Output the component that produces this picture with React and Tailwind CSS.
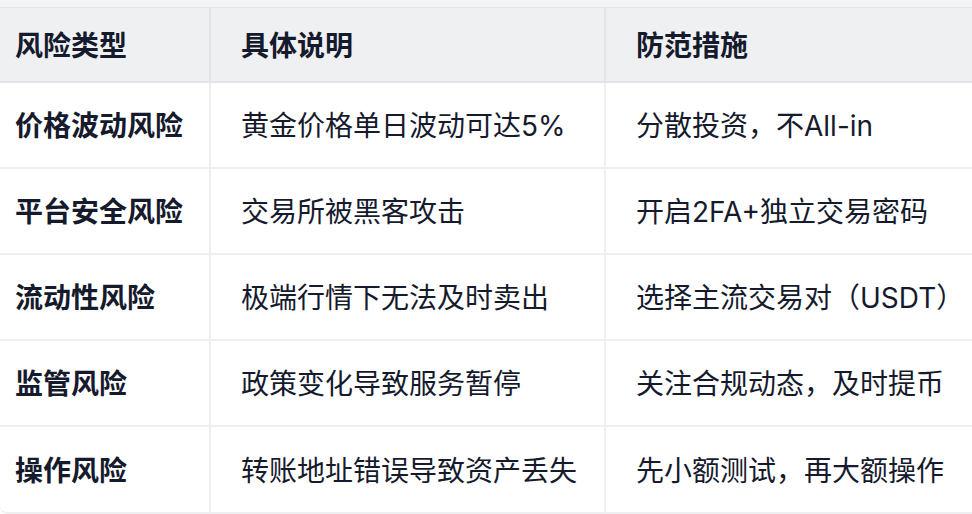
const rows = [
  ['价格波动风险', '黄金价格单日波动可达5%', '分散投资，不All-in'],
  ['平台安全风险', '交易所被黑客攻击', '开启2FA+独立交易密码'],
  ['流动性风险', '极端行情下无法及时卖出', '选择主流交易对（USDT）'],
  ['监管风险', '政策变化导致服务暂停', '关注合规动态，及时提币'],
  ['操作风险', '转账地址错误导致资产丢失', '先小额测试，再大额操作'],
]

export default function App() {
  return (
    <div
      className="w-[972px] h-[514px] overflow-hidden bg-white text-[#151a2d]"
      style={{ fontFamily: '"Inter", "Noto Sans CJK SC", sans-serif' }}
    >
      <div className="h-[8px] bg-[#f3f4f6] border-b border-[#e3e4e7]"></div>
      <div className="w-[1000px] rounded-b-lg border-b-2 border-[#eeeff1] overflow-hidden">
        <table className="w-full border-collapse table-fixed">
          <colgroup>
            <col className="w-[210px]" />
            <col className="w-[395px]" />
            <col />
          </colgroup>
          <thead>
            <tr className="bg-[#eff0f2] h-[74px]">
              <th className="pl-[15px] pt-[2px] text-left text-[28px] font-bold border-b-2 border-r-2 border-[#e3e4e7]">风险类型</th>
              <th className="pl-[30px] pt-[2px] text-left text-[28px] font-bold border-b-2 border-r-2 border-[#e3e4e7]">具体说明</th>
              <th className="pl-[30px] pt-[2px] text-left text-[28px] font-bold border-b-2 border-[#e3e4e7]">防范措施</th>
            </tr>
          </thead>
          <tbody>
            {rows.map((r, i) => (
              <tr key={i} className="h-[86px]">
                <td className={`pl-[15px] pt-[2px] text-[28px] font-bold border-r-2 border-[#eeeff1] ${i < rows.length - 1 ? 'border-b-2' : ''}`}>{r[0]}</td>
                <td className={`pl-[30px] pt-[2px] text-[28px] border-r-2 border-[#eeeff1] ${i < rows.length - 1 ? 'border-b-2' : ''}`}>{r[1]}</td>
                <td className={`pl-[30px] pt-[2px] text-[28px] border-[#eeeff1] whitespace-nowrap ${i < rows.length - 1 ? 'border-b-2' : ''}`}>{r[2]}</td>
              </tr>
            ))}
          </tbody>
        </table>
      </div>
    </div>
  )
}
